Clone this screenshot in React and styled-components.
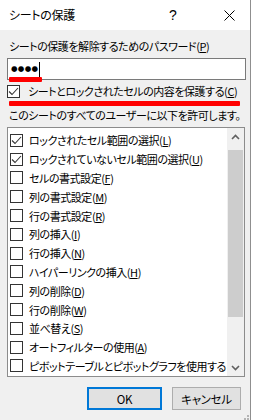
import React from "react";
import styled, { createGlobalStyle } from "styled-components";

const GlobalStyle = createGlobalStyle`
  html, body {
    margin: 0;
    padding: 0;
    background: #ffffff;
  }
  body {
    font-family: "Noto Sans CJK JP", "Noto Sans", sans-serif;
    font-size: 11px;
    color: #000;
  }
`;

const items = [
  { label: "ロックされたセル範囲の選択", key: "L", checked: true },
  { label: "ロックされていないセル範囲の選択", key: "U", checked: true },
  { label: "セルの書式設定", key: "F" },
  { label: "列の書式設定", key: "M" },
  { label: "行の書式設定", key: "R" },
  { label: "列の挿入", key: "I" },
  { label: "行の挿入", key: "N" },
  { label: "ハイパーリンクの挿入", key: "H" },
  { label: "列の削除", key: "D" },
  { label: "行の削除", key: "W" },
  { label: "並べ替え", key: "S" },
  { label: "オートフィルターの使用", key: "A" },
  { label: "ピボットテーブルとピボットグラフを使用する" },
];

const CheckMark = () => (
  <svg width="11" height="11" viewBox="0 0 11 11">
    <path d="M1 5.5 L4 8.5 L10 2" fill="none" stroke="#333" strokeWidth="1.1" />
  </svg>
);

const Chevron = ({ down }) => (
  <svg width="9" height="6" viewBox="0 0 9 6">
    <path
      d={down ? "M1 1 L4.5 4.5 L8 1" : "M1 5 L4.5 1.5 L8 5"}
      fill="none"
      stroke="#606060"
      strokeWidth="1.6"
    />
  </svg>
);

const Label = ({ text, k }) => (
  <>
    {text}
    {k && (
      <>
        (<u>{k}</u>)
      </>
    )}
  </>
);

const App = () => {
  return (
    <>
      <GlobalStyle />
      <StyledDialog>
        <StyledTitleBar>
          <StyledTitle>シートの保護</StyledTitle>
          <StyledHelp>?</StyledHelp>
          <StyledClose>
            <svg width="11" height="11" viewBox="0 0 11 11">
              <path d="M0.5 0.5 L10.5 10.5 M10.5 0.5 L0.5 10.5" stroke="#000" strokeWidth="1" />
            </svg>
          </StyledClose>
        </StyledTitleBar>

        <StyledBody>
          <StyledText>
            <Label text="シートの保護を解除するためのパスワード" k="P" />
          </StyledText>
          <StyledField>
            <StyledDots>●●●●</StyledDots>
            <StyledCaret />
            <StyledMark $width={33} $left={1} $bottom={-3} />
          </StyledField>

          <StyledCheckRow>
            <StyledBox>
              <CheckMark />
            </StyledBox>
            <span>
              <Label text="シートとロックされたセルの内容を保護する" k="C" />
            </span>
            <StyledMark $width={231} $left={2} $bottom={-7} />
          </StyledCheckRow>

          <StyledAllow>このシートのすべてのユーザーに以下を許可します。</StyledAllow>

          <StyledList>
            <StyledItems>
              {items.map((item) => (
                <StyledItem key={item.label}>
                  <StyledBox>{item.checked && <CheckMark />}</StyledBox>
                  <span>
                    <Label text={item.label} k={item.key} />
                  </span>
                </StyledItem>
              ))}
            </StyledItems>
            <StyledScrollBar>
              <StyledArrow>
                <Chevron />
              </StyledArrow>
              <StyledTrack>
                <StyledThumb />
              </StyledTrack>
              <StyledArrow>
                <Chevron down />
              </StyledArrow>
            </StyledScrollBar>
          </StyledList>

          <StyledButtons>
            <StyledButton $primary $width={75}>
              OK
            </StyledButton>
            <StyledButton $width={69}>キャンセル</StyledButton>
          </StyledButtons>
        </StyledBody>

        <StyledGrip>
          <svg width="9" height="9" viewBox="0 0 9 9">
            {[
              [7, 1],
              [4, 4],
              [7, 4],
              [1, 7],
              [4, 7],
              [7, 7],
            ].map(([x, y]) => (
              <rect key={`${x}-${y}`} x={x} y={y} width="2" height="2" fill="#b4b4b4" />
            ))}
          </svg>
        </StyledGrip>
      </StyledDialog>
    </>
  );
};

export default App;

const StyledDialog = styled.div`
  position: relative;
  display: flex;
  flex-direction: column;
  width: 251px;
  height: 420px;
  box-sizing: border-box;
  border-right: 1px solid #8f8f8f;
  background: #f0f0f0;
  font-feature-settings: "palt";
  letter-spacing: -0.45px;
  line-height: 16px;
  u {
    text-underline-offset: 1px;
  }
`;
const StyledTitleBar = styled.div`
  display: flex;
  align-items: center;
  height: 30px;
  padding-left: 9px;
  background: #ffffff;
`;
const StyledTitle = styled.div`
  flex: 1;
  font-size: 12px;
  letter-spacing: -0.3px;
`;
const StyledHelp = styled.div`
  width: 40px;
  margin-right: 2px;
  font-family: "Liberation Sans", sans-serif;
  font-size: 14px;
`;
const StyledClose = styled.div`
  display: flex;
  align-items: center;
  justify-content: center;
  width: 36px;
  height: 30px;
  margin-right: 3px;
`;
const StyledBody = styled.div`
  flex: 1;
  display: flex;
  flex-direction: column;
  padding: 8px 4px 0 7px;
`;
const StyledText = styled.div`
  height: 16px;
  padding-left: 2px;
  white-space: nowrap;
`;
const StyledField = styled.div`
  position: relative;
  display: flex;
  align-items: center;
  height: 22px;
  margin-top: 4px;
  padding-left: 3px;
  box-sizing: border-box;
  border: 1px solid #7a7a7a;
  background: #ffffff;
`;
const StyledDots = styled.span`
  font-family: "DejaVu Sans", sans-serif;
  font-size: 7.5px;
  letter-spacing: 0.3px;
`;
const StyledCaret = styled.span`
  width: 1px;
  height: 15px;
  margin-left: 1px;
  background: #000;
`;
const StyledMark = styled.div`
  position: absolute;
  left: ${(p) => p.$left}px;
  bottom: ${(p) => p.$bottom}px;
  width: ${(p) => p.$width}px;
  height: 5px;
  border-radius: 1px;
  background: #ff0000;
`;
const StyledCheckRow = styled.div`
  position: relative;
  display: flex;
  align-items: center;
  gap: 8px;
  height: 16px;
  margin-top: 3px;
  white-space: nowrap;
`;
const StyledBox = styled.span`
  display: flex;
  align-items: center;
  justify-content: center;
  flex: none;
  width: 13px;
  height: 13px;
  box-sizing: border-box;
  border: 1px solid #333333;
  background: #ffffff;
`;
const StyledAllow = styled.div`
  height: 16px;
  margin-top: 8px;
  padding-left: 2px;
  white-space: nowrap;
`;
const StyledList = styled.div`
  display: flex;
  height: 250px;
  margin-top: 4px;
  margin-right: 1px;
  box-sizing: border-box;
  border: 1px solid #8c8c8c;
  background: #ffffff;
`;
const StyledItems = styled.div`
  flex: 1;
  overflow: hidden;
  padding: 3px 0 0 1px;
`;
const StyledItem = styled.div`
  display: flex;
  align-items: center;
  gap: 6px;
  height: 18.8px;
  padding-left: 1px;
  white-space: nowrap;
`;
const StyledScrollBar = styled.div`
  display: flex;
  flex-direction: column;
  width: 17px;
  background: #f0f0f0;
`;
const StyledArrow = styled.div`
  display: flex;
  align-items: center;
  justify-content: center;
  height: 17px;
`;
const StyledTrack = styled.div`
  flex: 1;
  padding: 5px 1px 0;
`;
const StyledThumb = styled.div`
  height: 167px;
  background: #cdcdcd;
`;
const StyledButtons = styled.div`
  display: flex;
  justify-content: flex-end;
  gap: 10px;
  margin-top: 10px;
  padding-right: 5px;
`;
const StyledButton = styled.button`
  display: flex;
  align-items: center;
  justify-content: center;
  width: ${(p) => p.$width}px;
  height: 23px;
  padding: 0;
  box-sizing: border-box;
  border: ${(p) => (p.$primary ? "2px solid #0078d7" : "1px solid #adadad")};
  background: #e1e1e1;
  font-family: "Noto Sans CJK JP", "Noto Sans", sans-serif;
  font-size: 11.5px;
  font-feature-settings: "palt";
  letter-spacing: -0.3px;
  color: #000;
`;
const StyledGrip = styled.div`
  position: absolute;
  right: 1px;
  bottom: 1px;
  width: 9px;
  height: 9px;
`;
